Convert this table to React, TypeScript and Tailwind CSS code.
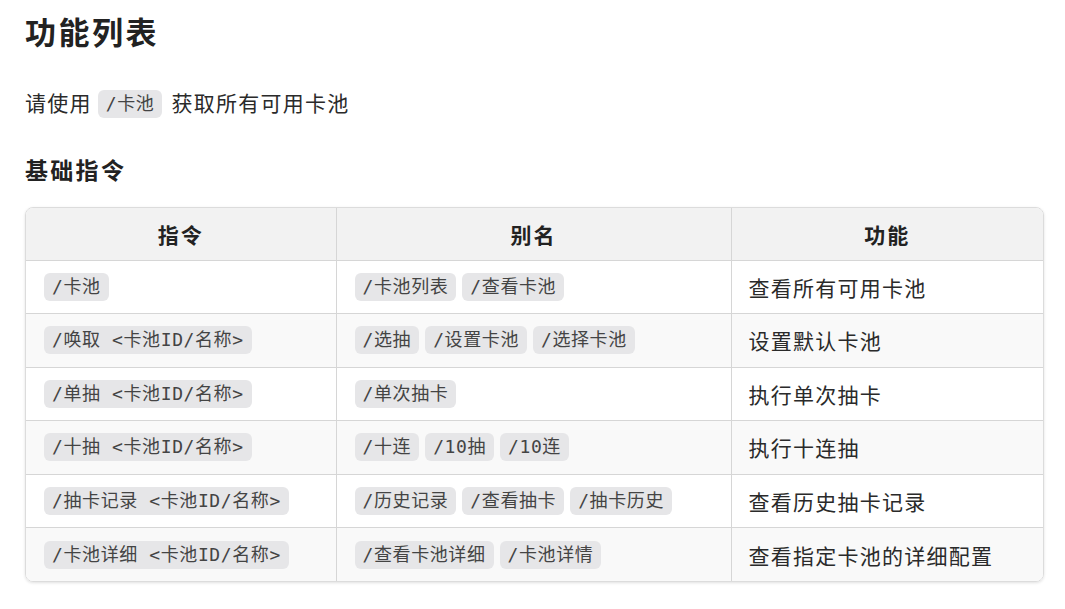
import React from 'react';

type Row = {
  cmd: string;
  aliases: string[];
  desc: string;
};

const rows: Row[] = [
  { cmd: '/卡池', aliases: ['/卡池列表', '/查看卡池'], desc: '查看所有可用卡池' },
  { cmd: '/唤取 <卡池ID/名称>', aliases: ['/选抽', '/设置卡池', '/选择卡池'], desc: '设置默认卡池' },
  { cmd: '/单抽 <卡池ID/名称>', aliases: ['/单次抽卡'], desc: '执行单次抽卡' },
  { cmd: '/十抽 <卡池ID/名称>', aliases: ['/十连', '/10抽', '/10连'], desc: '执行十连抽' },
  { cmd: '/抽卡记录 <卡池ID/名称>', aliases: ['/历史记录', '/查看抽卡', '/抽卡历史'], desc: '查看历史抽卡记录' },
  { cmd: '/卡池详细 <卡池ID/名称>', aliases: ['/查看卡池详细', '/卡池详情'], desc: '查看指定卡池的详细配置' },
];

function Code({ children }: { children: React.ReactNode }) {
  return (
    <code className="inline-block rounded-md bg-[#e6e6e8] px-[8px] py-[3px] font-['DejaVu_Sans_Mono','Noto_Sans_CJK_SC',monospace] text-[18px] leading-[22px] tracking-[0.6px] text-[#444] whitespace-pre">
      {children}
    </code>
  );
}

export default function App() {
  return (
    <div className="min-h-[609px] bg-white px-[25px] pt-[11px] font-['Noto_Sans_CJK_SC','Noto_Sans',sans-serif] text-[#222]">
      <h1 className="text-[31px] font-bold leading-[40px] tracking-[0.08em]">功能列表</h1>

      <p className="mt-[35px] flex items-center text-[21px] leading-[30px] tracking-[0.06em] text-[#2a2a2a]">
        <span>请使用</span>
        <span className="ml-[6px] mr-[9px]">
          <Code>/卡池</Code>
        </span>
        <span>获取所有可用卡池</span>
      </p>

      <h3 className="mt-[35px] text-[23px] font-bold leading-[32px] tracking-[0.1em]">基础指令</h3>

      <div className="mt-[22px] w-[1019px] overflow-hidden rounded-lg border border-[#dcdcdc] shadow-[0_1px_3px_rgba(0,0,0,0.12)]">
        <table className="w-full border-collapse">
          <colgroup>
            <col className="w-[310px]" />
            <col className="w-[395px]" />
            <col />
          </colgroup>
          <thead>
            <tr className="h-[52px] bg-[#f2f2f2]">
              <th className="border-b border-r border-[#d6d6d6] text-center text-[21px] leading-[28px] font-bold tracking-[0.1em]">指令</th>
              <th className="border-b border-r border-[#d6d6d6] text-center text-[21px] leading-[28px] font-bold tracking-[0.1em]">别名</th>
              <th className="border-b border-[#d6d6d6] text-center text-[21px] leading-[28px] font-bold tracking-[0.1em]">功能</th>
            </tr>
          </thead>
          <tbody>
            {rows.map((r, i) => (
              <tr
                key={i}
                className={`h-[53.5px] ${i % 2 === 1 ? 'bg-[#f9f9f9]' : 'bg-white'} ${i < rows.length - 1 ? 'border-b border-[#d6d6d6]' : ''}`}
              >
                <td className="border-r border-[#d6d6d6] px-[18px]">
                  <Code>{r.cmd}</Code>
                </td>
                <td className="border-r border-[#d6d6d6] px-[18px]">
                  <div className="flex gap-[6px]">
                    {r.aliases.map((a) => (
                      <Code key={a}>{a}</Code>
                    ))}
                  </div>
                </td>
                <td className="px-[17px] text-[21px] leading-[28px] tracking-[0.06em] text-[#2a2a2a]">{r.desc}</td>
              </tr>
            ))}
          </tbody>
        </table>
      </div>
    </div>
  );
}
